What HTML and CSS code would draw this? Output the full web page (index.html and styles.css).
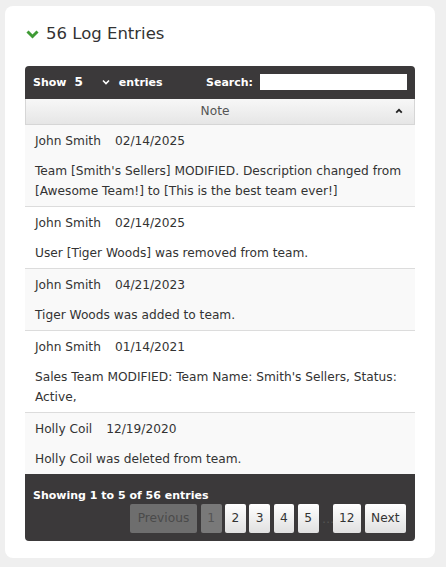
FILE: index.html
```html
<!DOCTYPE html>
<html>
<head>
    <meta charset="UTF-8">
    <meta name="viewport" content="width=device-width, initial-scale=1.0">
    <title>Log Entries</title>
    <link rel="stylesheet" href="styles.css">
</head>
<body>
    <div class="card">
        <h2 class="card-title">
            <svg class="toggle" width="13" height="9" viewBox="0 0 13 9"><path d="M1.5 1.5 L6.5 6.5 L11.5 1.5" fill="none" stroke="#3f9b35" stroke-width="3"/></svg>
            56 Log Entries
        </h2>
        <div class="log-table">
            <div class="toolbar">
                <div class="length">
                    Show
                    <span class="select">5
                        <svg width="8" height="6" viewBox="0 0 8 6"><path d="M1 1.5 L4 4.5 L7 1.5" fill="none" stroke="#fff" stroke-width="1.6"/></svg>
                    </span>
                    entries
                </div>
                <div class="search">
                    Search:
                    <input type="text">
                </div>
            </div>
            <div class="col-head">
                Note
                <svg class="sort" width="8" height="6" viewBox="0 0 8 6"><path d="M1.2 4.6 L4 1.8 L6.8 4.6" fill="none" stroke="#222" stroke-width="1.8"/></svg>
            </div>
            <div class="row odd">
                <div class="meta"><span class="who">John Smith</span><span>02/14/2025</span></div>
                <div class="note">Team [Smith's Sellers] MODIFIED. Description changed from [Awesome Team!] to [This is the best team ever!]</div>
            </div>
            <div class="row">
                <div class="meta"><span class="who">John Smith</span><span>02/14/2025</span></div>
                <div class="note">User [Tiger Woods] was removed from team.</div>
            </div>
            <div class="row odd">
                <div class="meta"><span class="who">John Smith</span><span>04/21/2023</span></div>
                <div class="note">Tiger Woods was added to team.</div>
            </div>
            <div class="row">
                <div class="meta"><span class="who">John Smith</span><span>01/14/2021</span></div>
                <div class="note">Sales Team MODIFIED: Team Name: Smith's Sellers, Status: Active,</div>
            </div>
            <div class="row odd">
                <div class="meta"><span class="who">Holly Coil</span><span>12/19/2020</span></div>
                <div class="note">Holly Coil was deleted from team.</div>
            </div>
            <div class="footer">
                <div class="info">Showing 1 to 5 of 56 entries</div>
                <div class="pager">
                    <span class="btn disabled">Previous</span>
                    <span class="btn current">1</span>
                    <span class="btn">2</span>
                    <span class="btn">3</span>
                    <span class="btn">4</span>
                    <span class="btn">5</span>
                    <span class="ellipsis">…</span>
                    <span class="btn">12</span>
                    <span class="btn">Next</span>
                </div>
            </div>
        </div>
    </div>
</body>
</html>
```

FILE: styles.css
```css
body {
    margin: 0;
    padding: 6px 11px 10px 5px;
    background-color: #efefef;
    font-family: "DejaVu Sans", Verdana, sans-serif;
    font-size: 12.2px;
    color: #333;
}
.card {
    background-color: #fff;
    border-radius: 8px;
    padding: 16px 20px 17px 20px;
}
.card-title {
    margin: 0 0 20px 0;
    font-size: 16.5px;
    font-weight: normal;
    line-height: 24px;
    color: #333;
    display: flex;
    align-items: center;
    gap: 7px;
}
.toggle {
    margin-left: 1px;
}
.log-table {
    border-radius: 4px;
    overflow: hidden;
    background-color: #3b393a;
}
.toolbar {
    height: 32px;
    display: flex;
    align-items: center;
    justify-content: space-between;
    padding: 0 8px;
    color: #fff;
    font-weight: bold;
    font-size: 11px;
}
.length {
    display: flex;
    align-items: center;
}
.select {
    display: inline-flex;
    align-items: center;
    gap: 19px;
    margin: 0 9px 0 8px;
    font-size: 12px;
}
.search {
    display: flex;
    align-items: center;
    gap: 7px;
}
.search input {
    width: 147px;
    height: 16px;
    border: none;
    padding: 0;
    margin: 0;
}
.col-head {
    position: relative;
    height: 25px;
    line-height: 25px;
    text-align: center;
    padding-right: 10px;
    color: #555;
    background: linear-gradient(#f7f7f7, #e6e6e6);
    border: 1px solid #d6d6d6;
    border-top: none;
    margin-top: 1px;
}
.sort {
    position: absolute;
    right: 11px;
    top: 9px;
}
.row {
    background-color: #fff;
    padding: 6px 10px 5px 10px;
    border-top: 1px solid #dcdcdc;
}
.row.odd {
    background-color: #f9f9f9;
}
.col-head + .row {
    border-top: none;
}
.meta {
    line-height: 20px;
    margin-bottom: 10px;
}
.who {
    margin-right: 14px;
}
.note {
    line-height: 20px;
}
.footer {
    padding: 14px 9px 8px 8px;
    color: #fff;
}
.info {
    font-weight: bold;
    font-size: 11px;
    line-height: 16px;
}
.pager {
    display: flex;
    justify-content: flex-end;
    align-items: center;
    gap: 3.5px;
}
.btn {
    height: 29px;
    line-height: 29px;
    padding: 0 6.5px;
    border-radius: 2px;
    color: #333;
    background: linear-gradient(#fff, #e0e0e0);
}
.btn.disabled {
    background: #6e6e6e;
    color: #4a4a4a;
    padding: 0 8px;
}
.btn.current {
    background: #797979;
    color: #555;
}
.ellipsis {
    color: #555;
    width: 7px;
    text-align: center;
}
```
